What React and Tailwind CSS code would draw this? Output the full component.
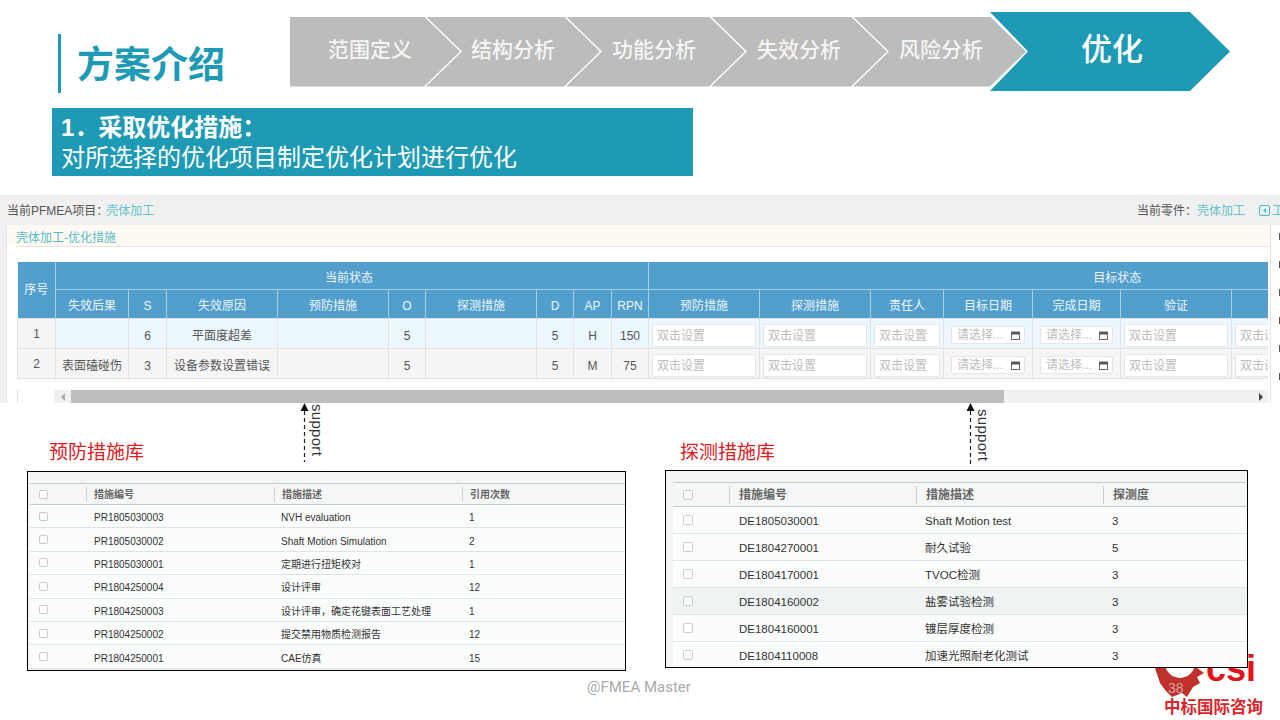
import React from 'react';

const notched = '[clip-path:polygon(0_0,calc(100%-36px)_0,100%_50%,calc(100%-36px)_100%,0_100%,36px_50%)]';

const steps = [
  { label: '范围定义', cls: 'w-[170px] pl-[38px] [clip-path:polygon(0_0,calc(100%-36px)_0,100%_50%,calc(100%-36px)_100%,0_100%)]' },
  { label: '结构分析', cls: `w-[174px] -ml-[34px] pl-[45px] ${notched}` },
  { label: '功能分析', cls: `w-[179px] -ml-[34px] pl-[46px] ${notched}` },
  { label: '失效分析', cls: `w-[176px] -ml-[34px] pl-[46px] ${notched}` },
  { label: '风险分析', cls: `w-[173px] -ml-[34px] pl-[46px] ${notched}` },
];

const mainCols = [38, 73, 38, 111, 111, 37, 111, 37, 38, 37, 111, 111, 73, 89, 88, 111, 111, 243];

const subHeads = ['失效后果', 'S', '失效原因', '预防措施', 'O', '探测措施', 'D', 'AP', 'RPN', '预防措施', '探测措施', '责任人', '目标日期', '完成日期', '验证', '', ''];

const mainRows = [
  { no: '1', effect: '', s: '6', cause: '平面度超差', o: '5', d: '5', ap: 'H', rpn: '150', bg: 'bg-[#ebf6fd]' },
  { no: '2', effect: '表面磕碰伤', s: '3', cause: '设备参数设置错误', o: '5', d: '5', ap: 'M', rpn: '75', bg: 'bg-[#f5f5f5]' },
];

const preventRows = [
  ['PR1805030003', 'NVH evaluation', '1'],
  ['PR1805030002', 'Shaft Motion Simulation', '2'],
  ['PR1805030001', '定期进行扭矩校对', '1'],
  ['PR1804250004', '设计评审', '12'],
  ['PR1804250003', '设计评审，确定花键表面工艺处理', '1'],
  ['PR1804250002', '提交禁用物质检测报告', '12'],
  ['PR1804250001', 'CAE仿真', '15'],
];

const detectRows = [
  ['DE1805030001', 'Shaft Motion test', '3'],
  ['DE1804270001', '耐久试验', '5'],
  ['DE1804170001', 'TVOC检测', '3'],
  ['DE1804160002', '盐雾试验检测', '3', true],
  ['DE1804160001', '镀层厚度检测', '3'],
  ['DE1804110008', '加速光照耐老化测试', '3'],
];

const Td = ({ children }) => (
  <td className="border border-[#dfe3e6] pt-[6px] whitespace-nowrap">{children}</td>
);

const InputCell = () => (
  <td className="border border-[#dfe3e6] px-[3px] pt-[4px]">
    <div className="h-[23px] bg-white border border-[#e4e6e8] rounded-[2px] pl-[4px] text-left text-[12px] leading-[23px] text-[#bdbdbd] overflow-hidden whitespace-nowrap">
      双击设置
    </div>
  </td>
);

const DateCell = () => (
  <td className="border border-[#dfe3e6] pt-[4px]">
    <div className="h-[18px] mx-[7px] bg-white border border-[#e4e6e8] rounded-[2px] flex items-center justify-between pl-[5px] pr-[4px] text-[12px] text-[#bdbdbd]">
      <span className="whitespace-nowrap">请选择...</span>
      <svg width="9" height="9" viewBox="0 0 9 9">
        <rect x="0.5" y="1" width="8" height="7.5" fill="#fff" stroke="#666" />
        <rect x="0.5" y="1" width="8" height="2.5" fill="#555" />
      </svg>
    </div>
  </td>
);

const Arrow = ({ height }) => (
  <svg width="9" height={height} viewBox={`0 0 9 ${height}`} className="shrink-0">
    <path d="M4.5 0 L8.5 8 L0.5 8 Z" fill="#111" />
    <line x1="4.5" y1="8" x2="4.5" y2={height} stroke="#222" strokeWidth="1.2" strokeDasharray="4 3" />
  </svg>
);

const Checkbox = ({ size }) => (
  <span className={`block ${size} border border-[#c9cccc] rounded-[2px] bg-white`} />
);

const LibTable = ({ rows, third, grid, box, head, cell, rowH, headH, idPad, textPad, checkPad, frame, inset }) => (
  <div className={`relative z-10 bg-white border border-black overflow-hidden ${frame}`}>
    <div className={`h-full flex flex-col bg-[#f3f4f4] ${inset}`}>
      <div className={`grid ${grid} ${headH} shrink-0 items-center bg-[#f5f6f6] border-y border-[#c8cccc] -mt-px`}>
        <div className={checkPad}><Checkbox size={box} /></div>
        {['措施编号', '措施描述', third].map((h) => (
          <div key={h} className={`border-l border-[#cfcfcf] ${textPad} ${head} text-[#666]`}>{h}</div>
        ))}
      </div>
      {rows.map((r) => (
        <div key={r[0]} className={`grid ${grid} ${rowH} shrink-0 items-center border-b border-[#dfe3e3] ${r[3] ? 'bg-[#eff3f3]' : 'bg-[#fbfcfc]'} ${cell} text-[#333]`}>
          <div className={checkPad}><Checkbox size={box} /></div>
          <div className={`${idPad} pt-[3px]`}>{r[0]}</div>
          <div className={`${textPad} pt-[3px]`}>{r[1]}</div>
          <div className={`${textPad} pt-[3px]`}>{r[2]}</div>
        </div>
      ))}
    </div>
  </div>
);

export default function App() {
  return (
    <div className="relative w-[1280px] h-[720px] overflow-hidden bg-white font-['Liberation_Sans','Noto_Sans_CJK_SC',sans-serif]">
      {/* header */}
      <div className="flex pt-[12px] h-[91px]">
        <div className="w-[290px] shrink-0 pl-[58px] pt-[22px]">
          <div className="h-[59px] border-l-[3px] border-[#1e9ab5] pl-[16px] pt-[3px] flex items-center">
            <span className="text-[37px] font-bold leading-none text-[#1e9ab5] whitespace-nowrap">方案介绍</span>
          </div>
        </div>
        <div className="flex items-center h-[79px]">
          {steps.map((s) => (
            <div
              key={s.label}
              className={`h-[70px] shrink-0 bg-[#bcbcbc] flex items-center pb-[4px] text-[21px] font-medium text-[#f4f4f4] whitespace-nowrap ${s.cls}`}
            >
              {s.label}
            </div>
          ))}
          <div className="h-[79px] w-[240px] shrink-0 -ml-[36px] pl-[4px] pb-[3px] bg-[#1e9ab5] flex items-center justify-center text-[31px] font-medium text-white [clip-path:polygon(0_0,calc(100%-40px)_0,100%_50%,calc(100%-40px)_100%,0_100%,38px_50%)]">
            优化
          </div>
        </div>
      </div>

      {/* banner */}
      <div className="mt-[17px] ml-[52px] w-[641px] h-[68px] bg-[#1e9ab5] pl-[9px] pt-[5px] text-white text-[24px] leading-[30px]">
        <div className="font-bold">1．采取优化措施：</div>
        <div>对所选择的优化项目制定优化计划进行优化</div>
      </div>

      {/* app screenshot */}
      <div className="mt-[19px] h-[208px] bg-[#f0f0f0] flex flex-col overflow-hidden text-[12px] text-[#555]">
        <div className="h-[30px] shrink-0 flex items-center justify-between pl-[7px] pt-[1px]">
          <div>当前PFMEA项目：<span className="text-[#62c3cb] -ml-[2px]">壳体加工</span></div>
          <div className="flex items-center">
            当前零件：<span className="text-[#62c3cb] mr-[14px]">壳体加工</span>
            <svg width="11" height="11" viewBox="0 0 11 11" className="mr-[2px]">
              <rect x="0.5" y="0.5" width="10" height="10" rx="1.5" fill="#e6f6f7" stroke="#4fb8c2" />
              <path d="M7 3 L4 5.5 L7 8 Z" fill="#4fb8c2" />
            </svg>
            <span className="text-[#62c3cb] w-[8px] overflow-hidden whitespace-nowrap">工</span>
          </div>
        </div>
        <div className="flex-1 flex pl-[6px]">
          <div className="w-[1264px] shrink-0 bg-white rounded-tl-[4px] border-l border-[#e4e4e4]">
            <div className="h-[22px] bg-[#fff9f3] pl-[9px] flex items-end">
              <div className="flex-1 h-full mr-[2px] pt-[2px] border-b border-[#e6e6e6] text-[#55bcc6] leading-[22px]">壳体加工-优化措施</div>
            </div>
            <div className="mt-[15px] ml-[10px] w-[1251px] overflow-hidden">
              <table className="table-fixed w-[1568px] border-collapse text-center text-[12px]">
                <colgroup>
                  {mainCols.map((w, i) => (
                    <col key={i} style={{ width: w }} />
                  ))}
                </colgroup>
                <thead className="bg-[#529fce] text-[#eef6fb]">
                  <tr className="h-[27px]">
                    <th rowSpan="2" className="font-normal border-r border-[#a9cfe6]">序号</th>
                    <th colSpan="9" className="font-normal pt-[6px] pr-[6px] border-r border-b border-[#a9cfe6]">当前状态</th>
                    <th colSpan="8" className="font-normal pt-[6px] border-b border-[#a9cfe6]">目标状态</th>
                  </tr>
                  <tr className="h-[29px]">
                    {subHeads.map((h, i) => (
                      <th key={i} className="font-normal pt-[5px] border-r border-[#a9cfe6]">{h}</th>
                    ))}
                  </tr>
                </thead>
                <tbody className="text-[#555]">
                  {mainRows.map((r) => (
                    <tr key={r.no} className={`h-[30px] ${r.bg}`}>
                      <td className="bg-[#f5f5f5] border border-[#dfe3e6] pt-[2px]">{r.no}</td>
                      <Td>{r.effect}</Td>
                      <Td>{r.s}</Td>
                      <Td>{r.cause}</Td>
                      <Td />
                      <Td>{r.o}</Td>
                      <Td />
                      <Td>{r.d}</Td>
                      <Td>{r.ap}</Td>
                      <Td>{r.rpn}</Td>
                      <InputCell />
                      <InputCell />
                      <InputCell />
                      <DateCell />
                      <DateCell />
                      <InputCell />
                      <InputCell />
                      <td />
                    </tr>
                  ))}
                </tbody>
              </table>
            </div>
            <div className="mt-[11px] ml-[10px] w-[1251px] h-[14px] flex border-l border-[#dddddd]">
              <div className="w-[36px] shrink-0 bg-white" />
              <div className="flex-1 flex items-center bg-[#f1f1f1]">
                <div className="w-[17px] shrink-0 flex justify-center">
                  <span className="w-0 h-0 border-y-[4px] border-y-transparent border-r-[4px] border-r-[#aaaaaa]" />
                </div>
                <div className="w-[933px] h-full bg-[#bdbdbd]" />
                <div className="flex-1 flex justify-end pr-[5px]">
                  <span className="w-0 h-0 border-y-[4px] border-y-transparent border-l-[4px] border-l-[#444444]" />
                </div>
              </div>
            </div>
          </div>
          <div className="flex-1 bg-white border-l border-[#e2e2e2] flex flex-col items-end gap-[21px] pt-[8px]">
            {[0, 1, 2, 3, 4, 5].map((i) => (
              <span key={i} className="w-px h-[7px] bg-[#555]" />
            ))}
          </div>
        </div>
      </div>

      {/* libraries */}
      <div className="flex">
        <div className="ml-[27px] w-[599px]">
          <div className="h-[68px] flex items-start">
            <div className="w-[273px] shrink-0 pl-[22px] pt-[38px] text-[19px] leading-[24px] text-[#d9201f]">预防措施库</div>
            <Arrow height={59} />
            <span className="mt-[1px] ml-[1px] [writing-mode:vertical-rl] text-[15px] leading-[15px] tracking-[0.3px] text-[#333]">support</span>
          </div>
          <LibTable
            rows={preventRows}
            third="引用次数"
            grid="grid-cols-[56px_188px_188px_1fr]"
            box="w-[9px] h-[9px]"
            head="text-[10px] font-bold"
            cell="text-[10px]"
            rowH="h-[23.4px]"
            headH="h-[22px]"
            idPad="pl-[8px]"
            textPad="pl-[7px]"
            checkPad="pl-[9px]"
            frame="h-[200px]"
            inset="pl-[2px] pt-[12px]"
          />
        </div>
        <div className="ml-[39px] w-[583px]">
          <div className="h-[67px] flex items-start">
            <div className="w-[301px] shrink-0 pl-[15px] pt-[38px] text-[19px] leading-[24px] text-[#d9201f]">探测措施库</div>
            <Arrow height={61} />
            <span className="mt-[6px] ml-[1px] [writing-mode:vertical-rl] text-[15px] leading-[15px] tracking-[0.3px] text-[#333]">support</span>
          </div>
          <LibTable
            rows={detectRows}
            third="探测度"
            grid="grid-cols-[56px_187px_187px_1fr]"
            box="w-[10px] h-[10px]"
            head="text-[12px] font-bold"
            cell="text-[11.5px]"
            rowH="h-[27px]"
            headH="h-[25px]"
            idPad="pl-[10px]"
            textPad="pl-[9px]"
            checkPad="pl-[10px]"
            frame="h-[198px]"
            inset="pl-[7px] pt-[12px]"
          />
        </div>
      </div>

      {/* footer, logo sits under the right table */}
      <div className="absolute left-[587px] top-[678px] text-[15px] leading-[18px] text-[#aaaaaa] font-['Roboto',sans-serif]">@FMEA Master</div>
      <svg width="56" height="46" viewBox="0 0 56 46" className="absolute left-[1152px] top-[656px]">
        <path
          fillRule="evenodd"
          fill="#c0312b"
          d="M3 12 L8 27 L13 34 L20 41 L30 37 L35 41 L41 31 L48 27 L45 21 L52 17 L45 12 L40 4 L28 0 L14 2 Z M28 22 A15 15 0 1 0 28 -8 A15 15 0 1 0 28 22 Z"
        />
      </svg>
      <div className="absolute left-[1206px] top-[648px] text-[36px] leading-[42px] font-bold text-[#e3141c]">csi</div>
      <div className="absolute left-[1168px] top-[680px] text-[14px] leading-[16px] text-[#d9a3a0]">38</div>
      <div className="absolute left-[1164px] top-[698px] text-[16.5px] leading-[19px] font-bold text-[#d8262a] whitespace-nowrap">中标国际咨询</div>
    </div>
  );
}
